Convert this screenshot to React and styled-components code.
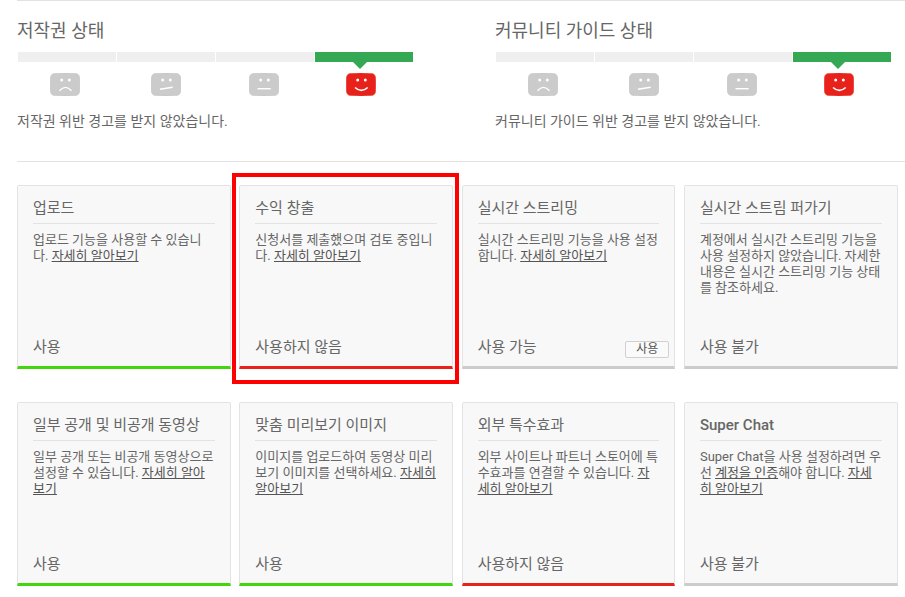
import React from "react";
import styled, { createGlobalStyle } from "styled-components";

const Global = createGlobalStyle`
  html, body { margin: 0; padding: 0; background: #fff; }
  body { font-family: Roboto, "Noto Sans CJK KR", sans-serif; color: #666; }
`;

const Page = styled.div`
  position: relative;
  width: 905px;
  height: 597px;
  overflow: hidden;
  padding-left: 17px;
  box-sizing: border-box;
`;

const StatusSection = styled.section`
  display: grid;
  grid-template-columns: 478px 1fr;
  height: 162px;
  box-sizing: border-box;
  border-top: 1px solid #e2e2e2;
  border-bottom: 1px solid #e2e2e2;
`;

const StatusCol = styled.div`
  display: flex;
  flex-direction: column;
  padding-top: 19px;
`;

const StatusTitle = styled.h2`
  margin: 0;
  height: 32px;
  font-size: 18px;
  line-height: 22px;
  font-weight: 400;
  color: #666;
`;

const Bars = styled.div`
  display: flex;
  gap: 1px;
  margin-left: 1px;
  height: 10px;
`;

const Bar = styled.div`
  position: relative;
  width: 98px;
  background: ${(p) => (p.$active ? "#34a853" : "#efefef")};
  ${(p) =>
    p.$active &&
    `&::after {
      content: "";
      position: absolute;
      top: 10px;
      left: 38px;
      border-left: 7px solid transparent;
      border-right: 7px solid transparent;
      border-top: 7px solid #34a853;
    }`}
`;

const Faces = styled.div`
  display: flex;
  margin-top: 11px;
  height: 23px;
`;

const FaceSvg = styled.svg`
  display: block;
  width: 30px;
  height: 23px;
  flex: none;
  margin-left: ${(p) => p.$left}px;
`;

const StatusNote = styled.p`
  margin: 16px 0 0;
  font-size: 14px;
  line-height: 18px;
  color: #666;
`;

const Cards = styled.div`
  display: grid;
  grid-template-columns: repeat(4, 213.67px);
  column-gap: 8.67px;
  row-gap: 33px;
  grid-auto-rows: 184px;
  margin-top: 23px;
`;

const Card = styled.article`
  display: flex;
  flex-direction: column;
  box-sizing: border-box;
  padding: 0 15px;
  background: #f8f8f8;
  border: 1px solid #e3e3e3;
  border-bottom: 3px solid ${(p) => p.$accent};
  border-radius: 2px 2px 0 0;
`;

const CardTitle = styled.h3`
  margin: 0;
  padding: 13px 0 0;
  height: 38px;
  box-sizing: border-box;
  border-bottom: 1px solid #e3e3e3;
  font-size: 15px;
  line-height: 18px;
  font-weight: ${(p) => (p.$latin ? 500 : 400)};
  color: #666;
  white-space: nowrap;
`;

const CardBody = styled.p`
  margin: 8px 0 0;
  font-size: 13px;
  line-height: 16px;
  color: #666;
  white-space: nowrap;
  flex: 1;
`;

const Link = styled.a`
  color: #555;
  text-decoration: underline;
`;

const CardFoot = styled.div`
  display: flex;
  align-items: flex-start;
  justify-content: space-between;
  height: 18px;
  margin-bottom: 10px;
  font-size: 15px;
  line-height: 18px;
  color: #666;
`;

const EnableButton = styled.button`
  width: 44px;
  height: 17px;
  padding: 0;
  margin: 3px -10px 0 0;
  background: #fafafa;
  border: 1px solid #d0d0d0;
  border-radius: 2px;
  font-family: inherit;
  font-size: 12px;
  line-height: 15px;
  color: #555;
`;

const Highlight = styled.div`
  position: absolute;
  left: 232px;
  top: 173px;
  width: 227px;
  height: 211px;
  box-sizing: border-box;
  border: 4px solid #ff0000;
  pointer-events: none;
`;

const mouths = [
  <path d="M9.5 17.7 Q15.5 11 21.5 17.7" fill="none" stroke="#fff" strokeWidth="1.4" />,
  <path d="M9 16.2 L21.7 14.3" fill="none" stroke="#fff" strokeWidth="1.4" />,
  <path d="M8.5 15.7 H21.7" fill="none" stroke="#fff" strokeWidth="1.4" />,
  <path d="M9 14.5 Q15.4 20.4 21.7 14.5" fill="none" stroke="#fff" strokeWidth="1.6" />,
];

const Face = ({ kind, left, color, edge }) => (
  <FaceSvg $left={left} viewBox="0 0 30 23" aria-hidden="true">
    <path
      d="M5 .4 Q15 -.2 25 .4 Q29.4 .6 29.6 5 Q30 11.5 29.6 18 Q29.4 22.4 25 22.6 Q15 23.2 5 22.6 Q.6 22.4 .4 18 Q0 11.5 .4 5 Q.6 .6 5 .4Z"
      fill={color}
      stroke={edge}
      strokeWidth="0.5"
    />
    <circle cx="11.7" cy="6.9" r="1.5" fill="#fff" />
    <circle cx="19.3" cy="6.9" r="1.5" fill="#fff" />
    {mouths[kind]}
  </FaceSvg>
);

const Status = ({ title, note }) => (
  <StatusCol>
    <StatusTitle>{title}</StatusTitle>
    <Bars>
      <Bar />
      <Bar />
      <Bar />
      <Bar $active />
    </Bars>
    <Faces>
      <Face kind={0} left={33} color="#cbcbcb" edge="#bdbdbd" />
      <Face kind={1} left={71} color="#cbcbcb" edge="#bdbdbd" />
      <Face kind={2} left={68} color="#cbcbcb" edge="#bdbdbd" />
      <Face kind={3} left={67} color="#e8211a" edge="#e0352e" />
    </Faces>
    <StatusNote>{note}</StatusNote>
  </StatusCol>
);

const GREEN = "#43d60f";
const RED = "#e8211a";
const GREY = "#cccccc";
const MORE = "자세히 알아보기";

export default function App() {
  return (
    <Page>
      <Global />
      <StatusSection>
        <Status title="저작권 상태" note="저작권 위반 경고를 받지 않았습니다." />
        <Status title="커뮤니티 가이드 상태" note="커뮤니티 가이드 위반 경고를 받지 않았습니다." />
      </StatusSection>
      <Cards>
        <Card $accent={GREEN}>
          <CardTitle>업로드</CardTitle>
          <CardBody>
            업로드 기능을 사용할 수 있습니<br />다. <Link>{MORE}</Link>
          </CardBody>
          <CardFoot>사용</CardFoot>
        </Card>
        <Card $accent={RED}>
          <CardTitle>수익 창출</CardTitle>
          <CardBody>
            신청서를 제출했으며 검토 중입니<br />다. <Link>{MORE}</Link>
          </CardBody>
          <CardFoot>사용하지 않음</CardFoot>
        </Card>
        <Card $accent={GREY}>
          <CardTitle>실시간 스트리밍</CardTitle>
          <CardBody>
            실시간 스트리밍 기능을 사용 설정<br />합니다. <Link>{MORE}</Link>
          </CardBody>
          <CardFoot>
            사용 가능
            <EnableButton>사용</EnableButton>
          </CardFoot>
        </Card>
        <Card $accent={GREY}>
          <CardTitle>실시간 스트림 퍼가기</CardTitle>
          <CardBody>
            계정에서 실시간 스트리밍 기능을<br />
            사용 설정하지 않았습니다. 자세한<br />
            내용은 실시간 스트리밍 기능 상태<br />
            를 참조하세요.
          </CardBody>
          <CardFoot>사용 불가</CardFoot>
        </Card>
        <Card $accent={GREEN}>
          <CardTitle>일부 공개 및 비공개 동영상</CardTitle>
          <CardBody>
            일부 공개 또는 비공개 동영상으로<br />
            설정할 수 있습니다. <Link>자세히 알아</Link><br />
            <Link>보기</Link>
          </CardBody>
          <CardFoot>사용</CardFoot>
        </Card>
        <Card $accent={GREEN}>
          <CardTitle>맞춤 미리보기 이미지</CardTitle>
          <CardBody>
            이미지를 업로드하여 동영상 미리<br />
            보기 이미지를 선택하세요. <Link>자세히</Link><br />
            <Link>알아보기</Link>
          </CardBody>
          <CardFoot>사용</CardFoot>
        </Card>
        <Card $accent={RED}>
          <CardTitle>외부 특수효과</CardTitle>
          <CardBody>
            외부 사이트나 파트너 스토어에 특<br />
            수효과를 연결할 수 있습니다. <Link>자</Link><br />
            <Link>세히 알아보기</Link>
          </CardBody>
          <CardFoot>사용하지 않음</CardFoot>
        </Card>
        <Card $accent={GREY}>
          <CardTitle $latin>Super Chat</CardTitle>
          <CardBody>
            Super Chat을 사용 설정하려면 우<br />
            선 <Link>계정을 인증</Link>해야 합니다. <Link>자세</Link><br />
            <Link>히 알아보기</Link>
          </CardBody>
          <CardFoot>사용 불가</CardFoot>
        </Card>
      </Cards>
      <Highlight />
    </Page>
  );
}
